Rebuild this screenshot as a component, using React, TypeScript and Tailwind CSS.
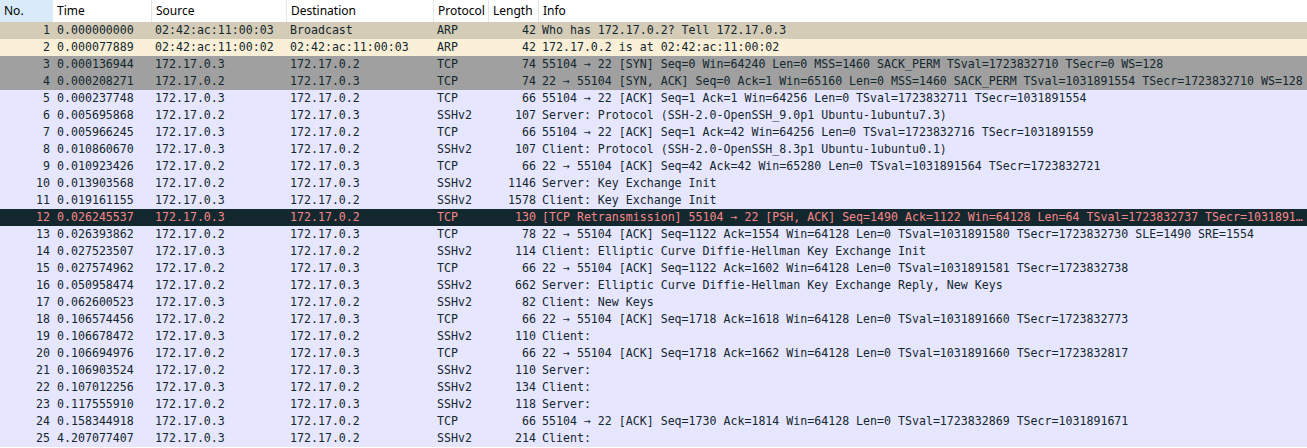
import React from "react";

type Row = [number, string, string, string, string, number, string];

const rows: Row[] = [
  [1, "0.000000000", "02:42:ac:11:00:03", "Broadcast", "ARP", 42, "Who has 172.17.0.2? Tell 172.17.0.3"],
  [2, "0.000077889", "02:42:ac:11:00:02", "02:42:ac:11:00:03", "ARP", 42, "172.17.0.2 is at 02:42:ac:11:00:02"],
  [3, "0.000136944", "172.17.0.3", "172.17.0.2", "TCP", 74, "55104 → 22 [SYN] Seq=0 Win=64240 Len=0 MSS=1460 SACK_PERM TSval=1723832710 TSecr=0 WS=128"],
  [4, "0.000208271", "172.17.0.2", "172.17.0.3", "TCP", 74, "22 → 55104 [SYN, ACK] Seq=0 Ack=1 Win=65160 Len=0 MSS=1460 SACK_PERM TSval=1031891554 TSecr=1723832710 WS=128"],
  [5, "0.000237748", "172.17.0.3", "172.17.0.2", "TCP", 66, "55104 → 22 [ACK] Seq=1 Ack=1 Win=64256 Len=0 TSval=1723832711 TSecr=1031891554"],
  [6, "0.005695868", "172.17.0.2", "172.17.0.3", "SSHv2", 107, "Server: Protocol (SSH-2.0-OpenSSH_9.0p1 Ubuntu-1ubuntu7.3)"],
  [7, "0.005966245", "172.17.0.3", "172.17.0.2", "TCP", 66, "55104 → 22 [ACK] Seq=1 Ack=42 Win=64256 Len=0 TSval=1723832716 TSecr=1031891559"],
  [8, "0.010860670", "172.17.0.3", "172.17.0.2", "SSHv2", 107, "Client: Protocol (SSH-2.0-OpenSSH_8.3p1 Ubuntu-1ubuntu0.1)"],
  [9, "0.010923426", "172.17.0.2", "172.17.0.3", "TCP", 66, "22 → 55104 [ACK] Seq=42 Ack=42 Win=65280 Len=0 TSval=1031891564 TSecr=1723832721"],
  [10, "0.013903568", "172.17.0.2", "172.17.0.3", "SSHv2", 1146, "Server: Key Exchange Init"],
  [11, "0.019161155", "172.17.0.3", "172.17.0.2", "SSHv2", 1578, "Client: Key Exchange Init"],
  [12, "0.026245537", "172.17.0.3", "172.17.0.2", "TCP", 130, "[TCP Retransmission] 55104 → 22 [PSH, ACK] Seq=1490 Ack=1122 Win=64128 Len=64 TSval=1723832737 TSecr=1031891564"],
  [13, "0.026393862", "172.17.0.2", "172.17.0.3", "TCP", 78, "22 → 55104 [ACK] Seq=1122 Ack=1554 Win=64128 Len=0 TSval=1031891580 TSecr=1723832730 SLE=1490 SRE=1554"],
  [14, "0.027523507", "172.17.0.3", "172.17.0.2", "SSHv2", 114, "Client: Elliptic Curve Diffie-Hellman Key Exchange Init"],
  [15, "0.027574962", "172.17.0.2", "172.17.0.3", "TCP", 66, "22 → 55104 [ACK] Seq=1122 Ack=1602 Win=64128 Len=0 TSval=1031891581 TSecr=1723832738"],
  [16, "0.050958474", "172.17.0.2", "172.17.0.3", "SSHv2", 662, "Server: Elliptic Curve Diffie-Hellman Key Exchange Reply, New Keys"],
  [17, "0.062600523", "172.17.0.3", "172.17.0.2", "SSHv2", 82, "Client: New Keys"],
  [18, "0.106574456", "172.17.0.2", "172.17.0.3", "TCP", 66, "22 → 55104 [ACK] Seq=1718 Ack=1618 Win=64128 Len=0 TSval=1031891660 TSecr=1723832773"],
  [19, "0.106678472", "172.17.0.3", "172.17.0.2", "SSHv2", 110, "Client: "],
  [20, "0.106694976", "172.17.0.2", "172.17.0.3", "TCP", 66, "22 → 55104 [ACK] Seq=1718 Ack=1662 Win=64128 Len=0 TSval=1031891660 TSecr=1723832817"],
  [21, "0.106903524", "172.17.0.2", "172.17.0.3", "SSHv2", 110, "Server: "],
  [22, "0.107012256", "172.17.0.3", "172.17.0.2", "SSHv2", 134, "Client: "],
  [23, "0.117555910", "172.17.0.2", "172.17.0.3", "SSHv2", 118, "Server: "],
  [24, "0.158344918", "172.17.0.3", "172.17.0.2", "TCP", 66, "55104 → 22 [ACK] Seq=1730 Ack=1814 Win=64128 Len=0 TSval=1723832869 TSecr=1031891671"],
  [25, "4.207077407", "172.17.0.3", "172.17.0.2", "SSHv2", 214, "Client: "],
];

function rowClass(n: number): string {
  if (n === 1) return "bg-[#d5ccb8] text-[#12272e]";
  if (n === 2) return "bg-[#faf0d7] text-[#12272e]";
  if (n === 3 || n === 4) return "bg-[#a0a0a0] text-[#12272e]";
  if (n === 12) return "bg-[#12272e] text-[#f78787]";
  return "bg-[#e7e6ff] text-[#12272e]";
}

const grid = "grid grid-cols-[53px_99px_135px_147px_55px_50px_768px]";

export default function App() {
  const headers = ["No.", "Time", "Source", "Destination", "Protocol", "Length", "Info"];
  return (
    <div className="w-[1307px] h-[448px] overflow-hidden bg-white">
      <div className={`${grid} h-[22px] bg-white text-[12px] text-black font-['Segoe_UI','Noto_Sans',sans-serif]`}>
        {headers.map((h, i) => (
          <div
            key={h}
            className={`flex items-center pl-[4px] leading-[22px] whitespace-nowrap overflow-hidden ${
              i === 0 ? "bg-[#d9ebf9] border-r border-[#d9ebf9]" : i === 6 ? "" : "border-r border-[#e5e5e5]"
            }`}
          >
            {h}
          </div>
        ))}
      </div>
      <div className="font-['DejaVu_Sans_Mono',monospace] text-[11.6px]">
        {rows.map((r) => (
          <div key={r[0]} className={`${grid} h-[17px] leading-[17px] ${rowClass(r[0])}`}>
            <div className="text-right pr-[3px] whitespace-nowrap">{r[0]}</div>
            <div className="pl-[4px] whitespace-nowrap overflow-hidden">{r[1]}</div>
            <div className="pl-[3px] whitespace-nowrap overflow-hidden">{r[2]}</div>
            <div className="pl-[3px] whitespace-nowrap overflow-hidden">{r[3]}</div>
            <div className="pl-[3px] whitespace-nowrap overflow-hidden">{r[4]}</div>
            <div className="text-right pr-[3px] whitespace-nowrap">{r[5]}</div>
            <div className="pl-[3px] pr-[2px] whitespace-nowrap overflow-hidden text-ellipsis">{r[6]}</div>
          </div>
        ))}
      </div>
    </div>
  );
}
